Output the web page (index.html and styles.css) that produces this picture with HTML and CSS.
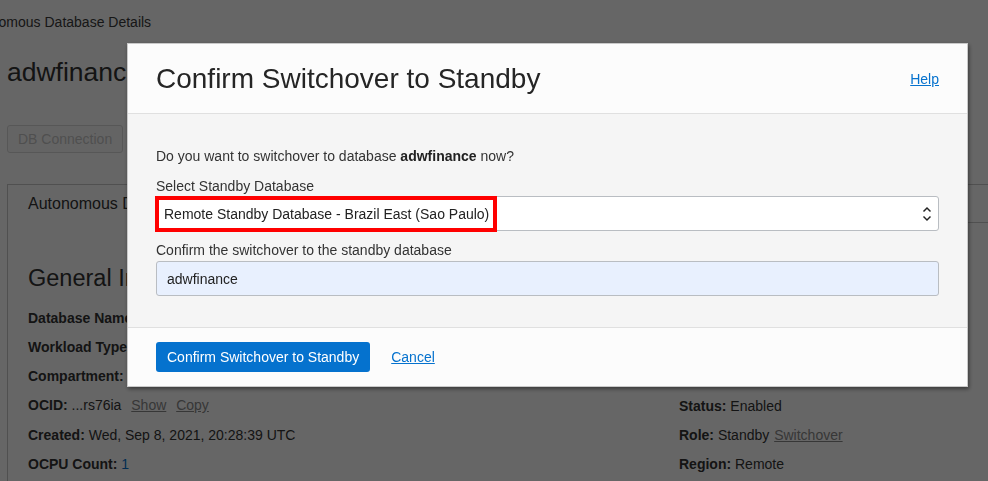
FILE: index.html
```html
<!DOCTYPE html>
<html lang="en">
<head>
<meta charset="utf-8">
<title>Autonomous Database Details</title>
<link rel="stylesheet" href="styles.css">
</head>
<body>
<div class="page">
  <nav class="breadcrumb">Autonomous Database Details</nav>
  <h1 class="db-title">adwfinance</h1>
  <div class="actions">
    <button class="btn-ghost" type="button" disabled>DB Connection</button>
    <button class="btn-ghost" type="button" disabled>Performance Hub</button>
  </div>
  <section class="panel">
    <div class="tabs">
      <div class="tab active">Autonomous Database Information</div>
      <div class="tab-fill"></div>
    </div>
    <div class="info-grid">
      <div class="info-col">
        <h2 class="section-title">General Information</h2>
        <div class="row"><b>Database Name:</b> ADWFINANCE</div>
        <div class="row"><b>Workload Type:</b> DW</div>
        <div class="row"><b>Compartment:</b> demo</div>
        <div class="row"><b>OCID:</b> ...rs76ia <a class="plain-link wide" href="#">Show</a> <a class="plain-link wide" href="#">Copy</a></div>
        <div class="row"><b>Created:</b> Wed, Sep 8, 2021, 20:28:39 UTC</div>
        <div class="row"><b>OCPU Count:</b> <span class="num">1</span></div>
      </div>
      <div class="info-col right">
        <h2 class="section-title">Autonomous Data Guard</h2>
        <div class="row"><b>Peer Lag:</b> 0 seconds</div>
        <div class="row"><b>Peer Role:</b> Primary</div>
        <div class="row"><b>Peer Region:</b> Local</div>
        <div class="row"><b>Status:</b> Enabled</div>
        <div class="row"><b>Role:</b> Standby <a class="plain-link" href="#">Switchover</a></div>
        <div class="row"><b>Region:</b> Remote</div>
      </div>
    </div>
  </section>
</div>

<div class="overlay"></div>

<div class="dialog" role="dialog" aria-labelledby="dlg-title">
  <header class="dialog-header">
    <h2 id="dlg-title" class="dialog-title">Confirm Switchover to Standby</h2>
    <a class="link" href="#">Help</a>
  </header>
  <div class="dialog-body">
    <p class="question">Do you want to switchover to database <b>adwfinance</b> now?</p>
    <label class="field-label" for="standby">Select Standby Database</label>
    <div class="select-wrap">
      <select id="standby" class="select">
        <option>Remote Standby Database - Brazil East (Sao Paulo)</option>
      </select>
      <svg class="chevrons" width="10" height="16" viewBox="0 0 10 16" aria-hidden="true">
        <path d="M1.5 5.6 L5 2 L8.5 5.6" fill="none" stroke="#222" stroke-width="1.4"/>
        <path d="M1.5 10.4 L5 14 L8.5 10.4" fill="none" stroke="#222" stroke-width="1.4"/>
      </svg>
      <span class="highlight"></span>
    </div>
    <label class="field-label second" for="confirm">Confirm the switchover to the standby database</label>
    <input id="confirm" class="input" type="text" value="adwfinance">
  </div>
  <footer class="dialog-footer">
    <button class="btn-primary" type="button">Confirm Switchover to Standby</button>
    <a class="link" href="#">Cancel</a>
  </footer>
</div>
</body>
</html>
```

FILE: styles.css
```css
* { box-sizing: border-box; }

html, body {
  margin: 0;
  padding: 0;
  height: 100%;
  overflow: hidden;
  background: #ffffff;
  font-family: "Liberation Sans", Arial, sans-serif;
  font-size: 14px;
  color: #333333;
}

.page {
  padding: 12px 0 0 7px;
  height: 100%;
}

.breadcrumb {
  line-height: 20px;
  margin-left: -45px;
  white-space: nowrap;
  color: #3a3a3a;
}

.db-title {
  margin: 24px 0 0 0;
  font-size: 26.5px;
  font-weight: normal;
  line-height: 32px;
  color: #333333;
  white-space: nowrap;
}

.actions {
  display: flex;
  gap: 8px;
  margin-top: 37px;
}

.btn-ghost {
  height: 28px;
  padding: 0 10px;
  border: 1px solid #dadada;
  border-radius: 3px;
  background: #fbfbfb;
  color: #c6c6c6;
  font-family: inherit;
  font-size: 14px;
  white-space: nowrap;
}

.panel {
  margin-top: 31px;
  border-left: 1px solid #c8c8c8;
  border-top: 1px solid #c8c8c8;
  height: 300px;
}

.tabs {
  display: flex;
  height: 38px;
}

.tab {
  padding: 9px 20px 0 20px;
  font-size: 16px;
  line-height: 20px;
  white-space: nowrap;
  color: #333333;
}

.tab-fill {
  flex: 1;
  border-bottom: 1px solid #c8c8c8;
}

.info-grid {
  display: grid;
  grid-template-columns: 651px 1fr;
  padding-left: 20px;
}

.section-title {
  margin: 41px 0 0 0;
  font-size: 23.5px;
  font-weight: normal;
  line-height: 28px;
  white-space: nowrap;
  color: #333333;
}

.info-col .section-title + .row { margin-top: 15.5px; }

.info-col.right { padding-top: 0.5px; }

.row {
  line-height: 20px;
  margin-top: 9.25px;
  white-space: nowrap;
}

.row b { color: #333333; }

.plain-link {
  color: #8a8a8a;
  text-decoration: underline;
  margin-left: 1px;
}

.plain-link.wide { margin-left: 6px; }

.num { color: #0572ce; }

/* modal backdrop */
.overlay {
  position: fixed;
  inset: 0;
  background: rgba(0, 0, 0, 0.6);
}

.dialog {
  position: fixed;
  left: 127px;
  top: 43px;
  width: 841px;
  background: #fcfcfc;
  border: 1px solid #c9c9c9;
  box-shadow: 1px 2px 4px rgba(0, 0, 0, 0.45);
  color: #333333;
}

.dialog-header {
  height: 70px;
  padding: 0 28px;
  display: flex;
  align-items: center;
  justify-content: space-between;
  border-bottom: 1px solid #e0e0e0;
}

.dialog-title {
  margin: 0;
  font-size: 28px;
  font-weight: normal;
  color: #252525;
  line-height: 34px;
}

.link {
  color: #0572ce;
  text-decoration: underline;
  font-size: 14px;
  line-height: 20px;
}

.dialog-body {
  background: #f5f5f5;
  padding: 32px 28px 31px 28px;
  display: flex;
  flex-direction: column;
}

.question {
  margin: 0;
  line-height: 20px;
  color: #333333;
}

.question b { color: #222222; }

.field-label {
  display: block;
  margin-top: 10px;
  margin-bottom: 0;
  line-height: 20px;
  color: #333333;
}

.field-label.second {
  margin-top: 9px;
  margin-bottom: 1px;
}

.select-wrap {
  position: relative;
}

.select {
  display: block;
  width: 100%;
  height: 35px;
  margin: 0;
  padding: 0 30px 0 7px;
  border: 1px solid #b9bdc2;
  border-radius: 3px;
  background: #ffffff;
  font-family: inherit;
  font-size: 14px;
  color: #222222;
  appearance: none;
  -webkit-appearance: none;
}

.chevrons {
  position: absolute;
  right: 7px;
  top: 10px;
  pointer-events: none;
}

.highlight {
  position: absolute;
  left: -1px;
  top: 0;
  width: 342px;
  height: 36px;
  border: 4px solid #ff0000;
  pointer-events: none;
}

.input {
  display: block;
  width: 100%;
  height: 35px;
  margin: 0;
  padding: 0 10px;
  border: 1px solid #b9bdc2;
  border-radius: 3px;
  background: #e8f0fe;
  font-family: inherit;
  font-size: 14px;
  color: #222222;
}

.dialog-footer {
  border-top: 1px solid #e0e0e0;
  padding: 14px 28px 14px 28px;
  display: flex;
  align-items: center;
  gap: 21px;
}

.btn-primary {
  height: 30px;
  padding: 0 11px;
  border: none;
  border-radius: 3px;
  background: #0572ce;
  color: #ffffff;
  font-family: inherit;
  font-size: 14px;
  white-space: nowrap;
}
```
